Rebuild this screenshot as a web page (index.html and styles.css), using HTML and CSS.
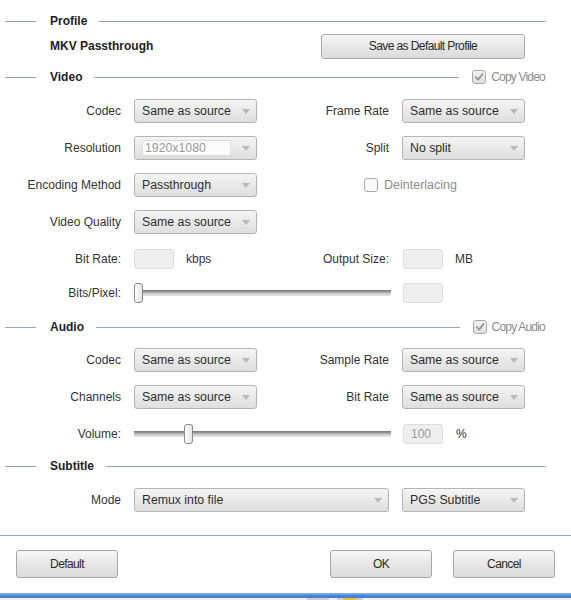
FILE: index.html
```html
<!DOCTYPE html>
<html>
<head>
<meta charset="utf-8">
<link rel="stylesheet" href="styles.css">
</head>
<body>
<div class="dialog">
  <div class="hdr hdr-profile"><span class="lead"></span><span class="title">Profile</span><span class="line"></span></div>
  <div class="profile-row">
    <span class="profile-name">MKV Passthrough</span>
    <button class="btn btn-save"><span>Save as Default Profile</span></button>
  </div>

  <div class="hdr hdr-check hdr-video"><span class="lead"></span><span class="title">Video</span><span class="line"></span>
    <label class="chk chk-on"><span class="box"><svg viewBox="0 0 14 14" width="14" height="14"><path d="M3.2 7.2 L6 10 L11 3.6" fill="none" stroke="#9a9a9a" stroke-width="2.2" stroke-linecap="round" stroke-linejoin="round"/></svg></span><span class="chk-text">Copy Video</span></label>
  </div>

  <div class="row r-first">
    <span class="lbl">Codec</span>
    <div class="sel"><span class="val">Same as source</span><span class="arrow"></span></div>
    <span class="lbl">Frame Rate</span>
    <div class="sel"><span class="val">Same as source</span><span class="arrow"></span></div>
  </div>
  <div class="row">
    <span class="lbl">Resolution</span>
    <div class="sel"><span class="edit">1920x1080</span><span class="arrow"></span></div>
    <span class="lbl">Split</span>
    <div class="sel"><span class="val">No split</span><span class="arrow"></span></div>
  </div>
  <div class="row">
    <span class="lbl">Encoding Method</span>
    <div class="sel"><span class="val">Passthrough</span><span class="arrow"></span></div>
    <label class="chk chk-deint"><span class="box"></span><span class="deint-text">Deinterlacing</span></label>
  </div>
  <div class="row">
    <span class="lbl">Video Quality</span>
    <div class="sel"><span class="val">Same as source</span><span class="arrow"></span></div>
  </div>
  <div class="row">
    <span class="lbl">Bit Rate:</span>
    <div class="field-unit"><span class="inp"></span><span class="unit">kbps</span></div>
    <span class="lbl lbl-r">Output Size:</span>
    <div class="field-unit"><span class="inp inp-r"></span><span class="unit">MB</span></div>
  </div>
  <div class="row r-bits">
    <span class="lbl">Bits/Pixel:</span>
    <div class="slider"><span class="track"></span><span class="thumb thumb-bits"></span></div>
    <div class="field-unit"><span class="inp inp-r"></span></div>
  </div>

  <div class="hdr hdr-check hdr-audio"><span class="lead"></span><span class="title">Audio</span><span class="line"></span>
    <label class="chk chk-on"><span class="box"><svg viewBox="0 0 14 14" width="14" height="14"><path d="M3.2 7.2 L6 10 L11 3.6" fill="none" stroke="#9a9a9a" stroke-width="2.2" stroke-linecap="round" stroke-linejoin="round"/></svg></span><span class="chk-text">Copy Audio</span></label>
  </div>

  <div class="row r-afirst">
    <span class="lbl">Codec</span>
    <div class="sel"><span class="val">Same as source</span><span class="arrow"></span></div>
    <span class="lbl">Sample Rate</span>
    <div class="sel"><span class="val">Same as source</span><span class="arrow"></span></div>
  </div>
  <div class="row">
    <span class="lbl">Channels</span>
    <div class="sel"><span class="val">Same as source</span><span class="arrow"></span></div>
    <span class="lbl">Bit Rate</span>
    <div class="sel"><span class="val">Same as source</span><span class="arrow"></span></div>
  </div>
  <div class="row">
    <span class="lbl">Volume:</span>
    <div class="slider"><span class="track"></span><span class="thumb thumb-vol"></span></div>
    <div class="field-unit"><span class="inp inp-r inp-txt">100</span><span class="unit unit-pct">%</span></div>
  </div>

  <div class="hdr hdr-sub"><span class="lead"></span><span class="title">Subtitle</span><span class="line"></span></div>
  <div class="row r-sub">
    <span class="lbl">Mode</span>
    <div class="sel sel-wide"><span class="val">Remux into file</span><span class="arrow"></span></div>
    <div class="sel"><span class="val">PGS Subtitle</span><span class="arrow"></span></div>
  </div>

  <div class="sep"></div>

  <div class="buttons">
    <button class="btn btn-dlg"><span>Default</span></button>
    <button class="btn btn-dlg btn-ok"><span>OK</span></button>
    <button class="btn btn-dlg btn-cancel"><span>Cancel</span></button>
  </div>
</div>
<div class="taskbar-edge"></div>
<div class="taskbar">
  <span class="tb-item tb-a"></span>
  <span class="tb-item tb-b"></span>
</div>
</body>
</html>
```
FILE: styles.css
```css
html, body {
  margin: 0;
  padding: 0;
  background: #ffffff;
}
body {
  font-family: "Liberation Sans", Arial, sans-serif;
  font-size: 12px;
  color: #333333;
  width: 571px;
  height: 600px;
  overflow: hidden;
}
.dialog {
  padding-top: 13px;
}

/* section headers */
.hdr {
  display: flex;
  align-items: center;
  height: 16px;
  padding-left: 5px;
  padding-right: 25px;
}
.hdr .lead {
  width: 31px;
  height: 1px;
  background: #95a7bf;
  margin-right: 14px;
}
.hdr .title {
  font-weight: bold;
  color: #222222;
  font-size: 12px;
}
.hdr .line {
  flex: 1;
  height: 1px;
  background: #95a7bf;
  margin-left: 12px;
}
.hdr-check {
  padding-right: 26px;
}
.hdr-check .line {
  margin-right: 13px;
}
.hdr-video { margin-top: 11px; }
.hdr-audio { margin-top: 14px; }
.hdr-sub { margin-top: 12px; }

/* profile row */
.profile-row {
  display: flex;
  align-items: center;
  height: 24px;
  margin-top: 5px;
  padding-left: 50px;
  padding-right: 46px;
}
.profile-name {
  font-weight: bold;
  color: #222222;
}
.btn {
  font-family: "Liberation Sans", Arial, sans-serif;
  font-size: 12px;
  color: #2a2a2a;
  border: 1px solid #a9a9a9;
  border-radius: 3px;
  background: linear-gradient(#f6f6f6, #e4e4e4 60%, #dcdcdc);
  padding: 0;
  margin: 0;
  letter-spacing: -0.6px;
  box-sizing: border-box;
}
.btn-save {
  margin-left: auto;
  width: 204px;
  height: 25px;
}

/* checkboxes */
.chk {
  display: flex;
  align-items: center;
}
.chk .box {
  width: 14px;
  height: 14px;
  box-sizing: border-box;
  border: 1px solid #a8a8a8;
  border-radius: 3px;
  background: linear-gradient(#f4f4f4, #dedede);
  display: flex;
  align-items: center;
  justify-content: center;
  overflow: hidden;
}
.chk .box svg {
  display: block;
}
.chk-text {
  margin-left: 5px;
  color: #8c8c8c;
  letter-spacing: -0.8px;
}
.chk-deint {
  grid-column: 3 / 5;
  padding-left: 94px;
}
.chk-deint .box {
  background: #f8f8f8;
  border-color: #a9a9a9;
}
.deint-text {
  margin-left: 6px;
  color: #8c8c8c;
  font-size: 12.5px;
}

/* rows */
.row {
  display: grid;
  grid-template-columns: 121px 123px 119px 123px;
  column-gap: 13px;
  height: 24px;
  align-items: center;
  margin-top: 13px;
}
.row.r-first { margin-top: 14px; }
.row.r-bits { margin-top: 10px; }
.row.r-afirst { margin-top: 13px; }
.row.r-sub {
  margin-top: 14px;
  grid-template-columns: 121px 255px 123px;
}
.lbl {
  text-align: right;
  color: #333333;
  white-space: nowrap;
}

.sel {
  position: relative;
  height: 24px;
  box-sizing: border-box;
  border: 1px solid #b4b4b4;
  border-radius: 3px;
  background: linear-gradient(#f5f5f5, #e9e9e9 50%, #dedede);
  display: flex;
  align-items: center;
}
.sel .val {
  padding-left: 7px;
  color: #2e2e2e;
  font-size: 12.3px;
  white-space: nowrap;
}
.sel .arrow {
  position: absolute;
  right: 6px;
  top: 9px;
  width: 0;
  height: 0;
  border-left: 4px solid transparent;
  border-right: 4px solid transparent;
  border-top: 5px solid #b8b8b8;
}
.sel .edit {
  margin-left: 7px;
  width: 89px;
  height: 16px;
  box-sizing: border-box;
  background: #fbfbfb;
  border: 1px solid #dcdcdc;
  color: #9a9a9a;
  padding-left: 2px;
  line-height: 14px;
  font-size: 12.3px;
}

/* inputs */
.field-unit {
  display: flex;
  align-items: center;
}
.inp {
  width: 40px;
  height: 20px;
  box-sizing: border-box;
  background: #efefef;
  border: 1px solid #dddddd;
  border-radius: 3px;
}
.inp-r {
  margin-left: 1px;
}
.inp-txt {
  color: #9a9a9a;
  padding-left: 7px;
  line-height: 18px;
}
.unit {
  margin-left: 12px;
  color: #333333;
}
.unit-pct {
  margin-left: 13px;
}

/* slider */
.slider {
  grid-column: 2 / 4;
  position: relative;
  height: 24px;
  margin-right: -2px;
}
.track {
  position: absolute;
  left: 0;
  right: 0;
  top: 9px;
  height: 6px;
  background: linear-gradient(#777777, #9a9a9a 30%, #cfcfcf 60%, #e6e6e6);
}
.thumb {
  position: absolute;
  top: 2px;
  width: 9px;
  height: 20px;
  box-sizing: border-box;
  border: 1px solid #8a8a8a;
  border-radius: 3px;
  background: linear-gradient(90deg, #ffffff, #e4e4e4);
}
.thumb-bits { left: 0; }
.thumb-vol { left: 50px; }

/* separator + buttons */
.sep {
  height: 1px;
  background: #95a7bf;
  margin-top: 23px;
}
.buttons {
  display: flex;
  margin-top: 14px;
  padding: 0 16px;
}
.btn-dlg {
  width: 102px;
  height: 28px;
  border-color: #a6a6a6;
}
.btn-ok {
  margin-left: auto;
}
.btn-cancel {
  margin-left: 21px;
}

/* bottom edge */
.taskbar-edge {
  margin-top: 15px;
  height: 5px;
  background: linear-gradient(#8ab8ee, #4b8ada 50%, #3c7bd0);
}
.taskbar {
  height: 3px;
  background: #eef2f7;
  display: flex;
}
.tb-item {
  height: 3px;
  background: #cfcfcf;
}
.tb-a {
  margin-left: 307px;
  width: 22px;
}
.tb-b {
  margin-left: 8px;
  width: 26px;
  background: linear-gradient(90deg, #cfcfcf 20%, #f0c040 30%, #f0c040 70%, #cfcfcf 80%);
}
```
